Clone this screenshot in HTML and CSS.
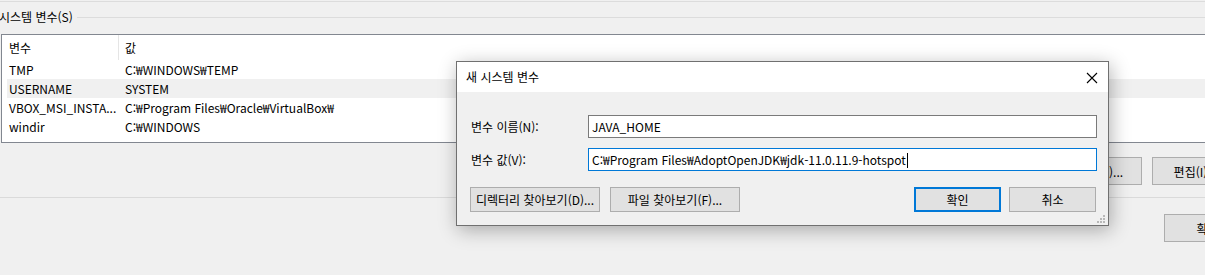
FILE: index.html
```html
<!DOCTYPE html>
<html lang="ko">
<head>
    <meta charset="UTF-8">
    <title>새 시스템 변수</title>
    <link rel="stylesheet" href="styles.css">
</head>
<body>
    <div class="window">
        <div class="top-rule"></div>

        <!-- 시스템 변수 그룹 -->
        <div class="group-head">
            <span class="group-title">시스템 변수(S)</span>
            <span class="group-line"></span>
        </div>

        <div class="listbox">
            <div class="list-head">
                <div class="col-name">변수</div>
                <div class="col-value">값</div>
            </div>
            <div class="list-row">
                <div class="cell-name">TMP</div>
                <div class="cell-value">C:₩WINDOWS₩TEMP</div>
            </div>
            <div class="list-row selected">
                <div class="cell-name">USERNAME</div>
                <div class="cell-value">SYSTEM</div>
            </div>
            <div class="list-row">
                <div class="cell-name">VBOX_MSI_INSTA...</div>
                <div class="cell-value">C:₩Program Files₩Oracle₩VirtualBox₩</div>
            </div>
            <div class="list-row">
                <div class="cell-name">windir</div>
                <div class="cell-value">C:₩WINDOWS</div>
            </div>
        </div>

        <div class="list-buttons">
            <button class="btn new">새로 만들기(W)...</button>
            <button class="btn">편집(I)...</button>
            <button class="btn">삭제(L)</button>
        </div>

        <div class="bottom-rule"></div>

        <div class="footer-buttons">
            <button class="btn">확인</button>
            <button class="btn">취소</button>
        </div>
    </div>

    <!-- 새 시스템 변수 대화 상자 -->
    <div class="dialog">
        <div class="dialog-title">
            <span>새 시스템 변수</span>
            <svg class="close-icon" width="12" height="12" viewBox="0 0 12 12">
                <path d="M1 1 L11 11 M11 1 L1 11" stroke="#000" stroke-width="1.1" fill="none"/>
            </svg>
        </div>
        <div class="dialog-body">
            <div class="field">
                <label>변수 이름(N):</label>
                <div class="textbox">JAVA_HOME</div>
            </div>
            <div class="field">
                <label>변수 값(V):</label>
                <div class="textbox focused">C:₩Program Files₩AdoptOpenJDK₩jdk-11.0.11.9-hotspot<span class="caret"></span></div>
            </div>
            <div class="dialog-buttons">
                <button class="btn wide">디렉터리 찾아보기(D)...</button>
                <button class="btn wide">파일 찾아보기(F)...</button>
                <span class="spacer"></span>
                <button class="btn short default">확인</button>
                <button class="btn short">취소</button>
            </div>
        </div>
        <svg class="grip" width="8" height="8" viewBox="0 0 8 8">
            <rect x="6" y="0" width="2" height="2" fill="#b8b8b8"/>
            <rect x="3" y="3" width="2" height="2" fill="#b8b8b8"/>
            <rect x="6" y="3" width="2" height="2" fill="#b8b8b8"/>
            <rect x="0" y="6" width="2" height="2" fill="#b8b8b8"/>
            <rect x="3" y="6" width="2" height="2" fill="#b8b8b8"/>
            <rect x="6" y="6" width="2" height="2" fill="#b8b8b8"/>
        </svg>
    </div>
</body>
</html>
```

FILE: styles.css
```css
* {
    box-sizing: border-box;
    margin: 0;
    padding: 0;
}

body {
    width: 1205px;
    height: 275px;
    overflow: hidden;
    position: relative;
    background-color: #f0f0f0;
    font-family: "Noto Sans CJK KR", "Noto Sans", sans-serif;
    font-size: 12px;
    line-height: 16px;
    color: #000;
}

.window {
    width: 1400px;
}

.top-rule {
    margin-top: 1px;
    border-top: 1px solid #dcdcdc;
}

.group-head {
    display: flex;
    align-items: center;
    height: 30px;
    margin-bottom: 2px;
    margin-left: -1px;
}

.group-title {
    padding-right: 4px;
}

.group-line {
    flex: 1;
    border-top: 1px solid #dcdcdc;
}

.listbox {
    margin-left: 1px;
    height: 109px;
    padding-left: 5px;
    background-color: #fff;
    border: 1px solid #828790;
}

.list-head {
    display: flex;
    height: 25px;
    align-items: center;
}

.col-name {
    width: 112px;
    height: 25px;
    padding-left: 2px;
    line-height: 25px;
    border-right: 1px solid #e5e5e5;
}

.col-value {
    padding-left: 6px;
}

.list-row {
    display: flex;
    height: 19px;
    line-height: 19px;
}

.list-row.selected {
    background-color: #f0f0f0;
}

.cell-name {
    width: 118px;
    padding-left: 2px;
    white-space: nowrap;
}

.btn {
    font-family: inherit;
    font-size: 12px;
    color: #000;
    background-color: #e1e1e1;
    border: 1px solid #adadad;
    white-space: nowrap;
}

.list-buttons {
    display: flex;
    gap: 10px;
    margin-top: 14px;
    padding-left: 1029px;
}

.list-buttons .btn {
    width: 87px;
    height: 28px;
    text-align: center;
}

.list-buttons .btn.new {
    width: 113px;
    padding-right: 12px;
}

.bottom-rule {
    margin-top: 12px;
    border-top: 1px solid #dadada;
}

.footer-buttons {
    display: flex;
    gap: 10px;
    margin-top: 16px;
    padding-left: 1164px;
}

.footer-buttons .btn {
    width: 87px;
    height: 28px;
    text-align: center;
}

/* dialog overlay */
.dialog {
    position: absolute;
    left: 456px;
    top: 61px;
    width: 653px;
    height: 165px;
    background-color: #f0f0f0;
    border: 1px solid #707070;
    box-shadow: 2px 4px 18px rgba(0, 0, 0, 0.3);
}

.dialog-title {
    display: flex;
    align-items: center;
    justify-content: space-between;
    height: 30px;
    padding: 0 10px 0 9px;
    background-color: #fff;
}

.close-icon {
    margin-top: 1px;
}

.dialog-body {
    padding: 23px 11px 0 13px;
}

.field {
    display: flex;
    align-items: center;
    margin-bottom: 10px;
}

.field label {
    width: 118px;
    padding-left: 1px;
}

.textbox {
    flex: 1;
    height: 23px;
    padding-left: 3px;
    line-height: 21px;
    background-color: #fff;
    border: 1px solid #7a7a7a;
    white-space: nowrap;
}

.textbox.focused {
    border-color: #0078d7;
}

.caret {
    display: inline-block;
    width: 1px;
    height: 15px;
    margin-left: 1px;
    vertical-align: -3px;
    background-color: #000;
}

.dialog-buttons {
    display: flex;
    gap: 10px;
    margin-top: 16px;
    padding-right: 1px;
}

.spacer {
    flex: 1;
}

.btn.wide {
    width: 130px;
    height: 25px;
}

.btn.short {
    width: 87px;
    height: 25px;
}

.btn.default {
    border: 2px solid #0078d7;
}

.dialog-buttons .btn.short + .btn.short {
    margin-left: -2px;
}

.grip {
    position: absolute;
    right: 3px;
    bottom: 2px;
}
```
